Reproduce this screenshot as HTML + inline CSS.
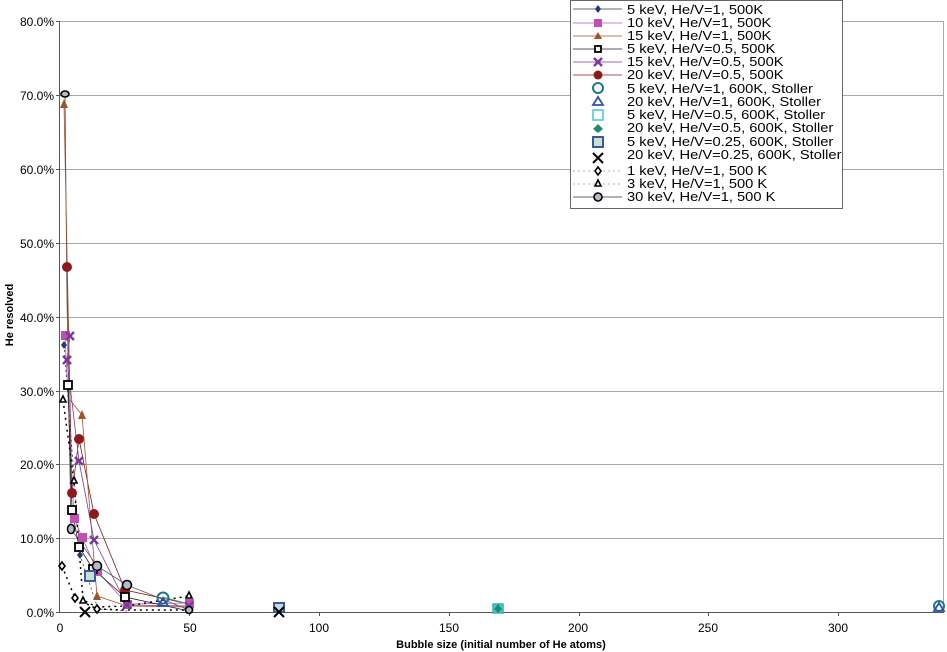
<!DOCTYPE html>
<html><head><meta charset="utf-8"><style>
html,body{margin:0;padding:0;background:#fff;}
svg{display:block;font-family:"Liberation Sans",sans-serif;}
</style></head><body>
<svg width="947" height="652" viewBox="0 0 947 652">
<g stroke="#a8a8a8" stroke-width="1">
<line x1="60" y1="21.5" x2="944" y2="21.5"/>
<line x1="60" y1="95.5" x2="944" y2="95.5"/>
<line x1="60" y1="169.5" x2="944" y2="169.5"/>
<line x1="60" y1="243.5" x2="944" y2="243.5"/>
<line x1="60" y1="317.5" x2="944" y2="317.5"/>
<line x1="60" y1="391.5" x2="944" y2="391.5"/>
<line x1="60" y1="464.5" x2="944" y2="464.5"/>
<line x1="60" y1="538.5" x2="944" y2="538.5"/>
<line x1="943.5" y1="21" x2="943.5" y2="612"/>
</g>
<g stroke="#555" stroke-width="1">
<line x1="59.5" y1="21" x2="59.5" y2="613"/>
<line x1="59" y1="612.5" x2="944" y2="612.5"/>
<line x1="56" y1="21.5" x2="60" y2="21.5"/><line x1="56" y1="95.5" x2="60" y2="95.5"/><line x1="56" y1="169.5" x2="60" y2="169.5"/><line x1="56" y1="243.5" x2="60" y2="243.5"/><line x1="56" y1="317.5" x2="60" y2="317.5"/><line x1="56" y1="391.5" x2="60" y2="391.5"/><line x1="56" y1="464.5" x2="60" y2="464.5"/><line x1="56" y1="538.5" x2="60" y2="538.5"/><line x1="56" y1="612.5" x2="60" y2="612.5"/>
<line x1="189.5" y1="612" x2="189.5" y2="616"/><line x1="319.5" y1="612" x2="319.5" y2="616"/><line x1="449.5" y1="612" x2="449.5" y2="616"/><line x1="579.5" y1="612" x2="579.5" y2="616"/><line x1="708.5" y1="612" x2="708.5" y2="616"/><line x1="838.5" y1="612" x2="838.5" y2="616"/>
</g>
<g font-size="12" fill="#000" text-anchor="end">
<text x="54" y="26">80.0%</text><text x="54" y="100">70.0%</text><text x="54" y="174">60.0%</text><text x="54" y="248">50.0%</text><text x="54" y="322">40.0%</text><text x="54" y="396">30.0%</text><text x="54" y="469">20.0%</text><text x="54" y="543">10.0%</text><text x="54" y="617">0.0%</text>
</g>
<g font-size="12" fill="#000" text-anchor="middle">
<text x="60" y="632">0</text><text x="190" y="632">50</text><text x="319" y="632">100</text><text x="449" y="632">150</text><text x="578" y="632">200</text><text x="708" y="632">250</text><text x="838" y="632">300</text>
</g>
<text x="501" y="648" font-size="11" font-weight="bold" text-anchor="middle">Bubble size (initial number of He atoms)</text>
<text x="0" y="0" font-size="11" font-weight="bold" text-anchor="middle" transform="translate(13,315) rotate(-90)">He resolved</text>

<g fill="none" stroke-width="0.8">
<polyline stroke="#555" points="65,94 67,300 71,529 97,566 127,585 189,610"/>
<polyline stroke="#8b1a1a" points="67,267 72,493 79,439 94,514 125,590 189,604"/>
<polyline stroke="#a0522d" points="64,104 70,400 82,415 97,596 127,606 189,607"/>
<polyline stroke="#c050b0" points="65,335 74,518 82,537 97,571 127,604 189,603"/>
<polyline stroke="#7a3a9a" points="70,336 67,360 79,461 94,540 127,605 189,606"/>
<polyline stroke="#222" points="68,385 72,510 79,547 93,569 125,597 189,611"/>
<polyline stroke="#334" stroke-dasharray="2,3" points="64,345 80,555 98,609 127,611"/>
<polyline stroke="#000" stroke-dasharray="2,4" stroke-width="1.5" points="62,566 75,598 97,609 127,610 189,610"/>
<polyline stroke="#000" stroke-dasharray="2,4" stroke-width="1.5" points="63,400 74,481 83,600 97,607 127,606 189,596"/>
<polyline stroke="#2a6" points="163,597 189,604"/>
</g>
<g>
<g fill="#c050b0"><rect x="61" y="331" width="9" height="9"/><rect x="70" y="514" width="9" height="9"/><rect x="78" y="533" width="9" height="9"/><rect x="93" y="567" width="9" height="9"/><rect x="123" y="600" width="9" height="9"/><rect x="185" y="599" width="9" height="9"/></g>
<g fill="#a0522d"><path d="M64,99 L68,108 L60,108Z"/><path d="M82,410 L86,419 L78,419Z"/><path d="M97,591 L101,600 L93,600Z"/></g>
<g fill="#8b1a1a"><circle cx="67" cy="267" r="5"/><circle cx="72" cy="493" r="5"/><circle cx="79" cy="439" r="5"/><circle cx="94" cy="514" r="5"/><circle cx="125" cy="590" r="5"/></g>
<g stroke="#7a3a9a" stroke-width="2.5"><path d="M66,332l8,8M74,332l-8,8M63,356l8,8M71,356l-8,8M75,457l8,8M83,457l-8,8M90,536l8,8M98,536l-8,8M123,601l8,8M131,601l-8,8M185,602l8,8M193,602l-8,8"/></g>
<g fill="#fff" stroke="#000" stroke-width="1.8"><rect x="64" y="381" width="8" height="8"/><rect x="68" y="506" width="8" height="8"/><rect x="75" y="543" width="8" height="8"/><rect x="89" y="565" width="8" height="8"/><rect x="121" y="593" width="8" height="8"/></g>
<g fill="#223a7a"><path d="M64,341l3,4l-3,4l-3,-4z"/><path d="M80,551l3,4l-3,4l-3,-4z"/><path d="M98,605l3,4l-3,4l-3,-4z"/></g>
<g fill="#fff" stroke="#000" stroke-width="1.6"><path d="M62,562l3,4l-3,4l-3,-4z"/><path d="M75,594l3,4l-3,4l-3,-4z"/><path d="M97,605l3,4l-3,4l-3,-4z"/><path d="M63,396l3,6h-6z"/><path d="M74,477l3,6h-6z"/><path d="M83,597l3,6h-6z"/><path d="M189,592l3,6h-6z"/></g>
<g fill="#b8b8c8" stroke="#000" stroke-width="1.6"><ellipse cx="65" cy="94" rx="4" ry="3"/><ellipse cx="71" cy="529" rx="3.5" ry="4.5"/><circle cx="97" cy="566" r="4.5"/><circle cx="127" cy="585" r="4.5"/><circle cx="189" cy="610" r="3.5"/></g>
<g fill="none" stroke="#1a7a8a" stroke-width="2"><circle cx="163" cy="598" r="5.5"/><circle cx="939" cy="606" r="5"/></g>
<g fill="none" stroke="#3050b0" stroke-width="1.8"><path d="M163,598l5,8h-10z"/><path d="M939,603l5,8h-10z"/></g>
<rect x="85" y="571" width="10" height="10" fill="#c8e0d0" stroke="#3a5a9a" stroke-width="2"/>
<rect x="274" y="603" width="10" height="9" fill="#c8d8e0" stroke="#3a5a9a" stroke-width="2"/>
<rect x="493" y="604" width="10" height="9" fill="#50c8c8" stroke="#30b0c0" stroke-width="1.5"/>
<path d="M498,604l4,5l-4,4l-4,-4z" fill="#208a70"/>
<g stroke="#000" stroke-width="2"><path d="M80,607l10,10M90,607l-10,10M274,607l10,10M284,607l-10,10"/></g>
</g>

<rect x="570.5" y="0.5" width="272" height="208" fill="#fff" stroke="#666"/>
<g stroke-width="0.8" fill="none">
<line x1="573" y1="9" x2="622" y2="9" stroke="#334"/>
<line x1="573" y1="23" x2="622" y2="23" stroke="#c050b0"/>
<line x1="573" y1="36" x2="622" y2="36" stroke="#a0522d"/>
<line x1="573" y1="49" x2="622" y2="49" stroke="#222"/>
<line x1="573" y1="62" x2="622" y2="62" stroke="#7a3a9a"/>
<line x1="573" y1="75" x2="622" y2="75" stroke="#8b1a1a"/>
<line x1="573" y1="171" x2="622" y2="171" stroke="#999" stroke-dasharray="2,3"/>
<line x1="573" y1="184" x2="622" y2="184" stroke="#999" stroke-dasharray="2,3"/>
<line x1="573" y1="197" x2="622" y2="197" stroke="#333"/>
</g>
<g>
<path d="M598,5l3,4l-3,4l-3,-4z" fill="#223a7a"/>
<rect x="594" y="19" width="8" height="8" fill="#c050b0"/>
<path d="M598,32l4,7h-8z" fill="#a0522d"/>
<rect x="595" y="46" width="6" height="6" fill="#fff" stroke="#000" stroke-width="1.8"/>
<path d="M594,58l8,8M602,58l-8,8" stroke="#7a3a9a" stroke-width="2.5"/>
<circle cx="598" cy="75" r="4.5" fill="#8b1a1a"/>
<circle cx="598" cy="88" r="5" fill="none" stroke="#1a7a8a" stroke-width="2"/>
<path d="M598,97l5,8h-10z" fill="none" stroke="#3050b0" stroke-width="1.8"/>
<rect x="593" y="110" width="10" height="10" fill="#fff" stroke="#40c8d8" stroke-width="1.5"/>
<path d="M598,124l5,5l-5,4l-5,-4z" fill="#208a70"/>
<rect x="593" y="137" width="10" height="10" fill="#c8e0d0" stroke="#3a5a9a" stroke-width="2"/>
<path d="M593,153l10,10M603,153l-10,10" stroke="#000" stroke-width="2"/>
<path d="M598,167l3,4l-3,4l-3,-4z" fill="#fff" stroke="#000" stroke-width="1.6"/>
<path d="M598,180l3,6h-6z" fill="#fff" stroke="#000" stroke-width="1.6"/>
<circle cx="598" cy="197" r="4" fill="#b8b8c8" stroke="#000" stroke-width="1.6"/>
</g>
<g font-size="13" fill="#000" transform="translate(627,0) scale(1.13,1) translate(-627,0)">
<text x="627" y="14">5 keV, He/V=1, 500K</text>
<text x="627" y="27">10 keV, He/V=1, 500K</text>
<text x="627" y="40">15 keV, He/V=1, 500K</text>
<text x="627" y="53">5 keV, He/V=0.5, 500K</text>
<text x="627" y="66">15 keV, He/V=0.5, 500K</text>
<text x="627" y="79">20 keV, He/V=0.5, 500K</text>
<text x="627" y="93">5 keV, He/V=1, 600K, Stoller</text>
<text x="627" y="106">20 keV, He/V=1, 600K, Stoller</text>
<text x="627" y="119">5 keV, He/V=0.5, 600K, Stoller</text>
<text x="627" y="132">20 keV, He/V=0.5, 600K, Stoller</text>
<text x="627" y="146">5 keV, He/V=0.25, 600K, Stoller</text>
<text x="627" y="159">20 keV, He/V=0.25, 600K, Stoller</text>
<text x="627" y="175">1 keV, He/V=1, 500 K</text>
<text x="627" y="188">3 keV, He/V=1, 500 K</text>
<text x="627" y="201">30 keV, He/V=1, 500 K</text>
</g>
</svg>
</body></html>
